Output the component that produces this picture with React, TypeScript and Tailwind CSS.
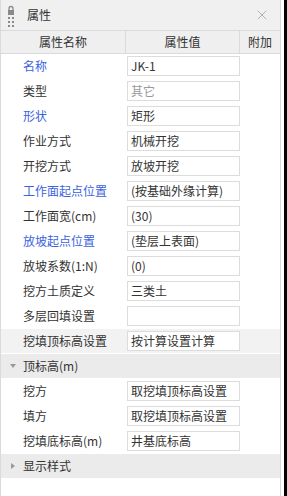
import { X } from "lucide-react";

type Row = {
  label: string;
  value: string;
  blue?: boolean;
  muted?: boolean;
  selected?: boolean;
};

const ROWS: Row[] = [
  { label: "名称", value: "JK-1", blue: true },
  { label: "类型", value: "其它", muted: true },
  { label: "形状", value: "矩形", blue: true },
  { label: "作业方式", value: "机械开挖" },
  { label: "开挖方式", value: "放坡开挖" },
  { label: "工作面起点位置", value: "(按基础外缘计算)", blue: true },
  { label: "工作面宽(cm)", value: "(30)" },
  { label: "放坡起点位置", value: "(垫层上表面)", blue: true },
  { label: "放坡系数(1:N)", value: "(0)" },
  { label: "挖方土质定义", value: "三类土" },
  { label: "多层回填设置", value: "" },
  { label: "挖填顶标高设置", value: "按计算设置计算", selected: true },
];

const TOP_ROWS: Row[] = [
  { label: "挖方", value: "取挖填顶标高设置" },
  { label: "填方", value: "取挖填顶标高设置" },
  { label: "挖填底标高(m)", value: "井基底标高" },
];

function PropRow({ row }: { row: Row }) {
  return (
    <div
      className={`flex h-[25px] items-center border-b border-white ${row.selected ? "bg-[#f2f2f2]" : "bg-white"}`}
    >
      <div className={`w-[126px] pl-[22px] ${row.blue ? "text-[#3a63e0]" : "text-[#333]"}`}>{row.label}</div>
      <div
        className={`flex h-[20px] w-[113px] items-center border border-[#dcdcdc] bg-white pl-[3px] ${row.muted ? "text-[#9a9a9a]" : "text-[#333]"}`}
      >
        {row.value}
      </div>
    </div>
  );
}

function Section({ label, open }: { label: string; open: boolean }) {
  return (
    <div className="flex h-[25px] items-center border-b border-white bg-[#ebebeb] text-[#333]">
      <div className="flex w-[22px] justify-center pl-[2px]">
        {open ? (
          <svg width="6" height="4" viewBox="0 0 6 4">
            <path d="M0 0h6L3 4z" fill="#9a9a9a" />
          </svg>
        ) : (
          <svg width="4" height="6" viewBox="0 0 4 6">
            <path d="M0 0v6l4-3z" fill="#9a9a9a" />
          </svg>
        )}
      </div>
      <span>{label}</span>
    </div>
  );
}

function LockGrip() {
  return (
    <svg width="8" height="24" viewBox="0 0 8 24" className="shrink-0">
      <path d="M2 7V5.5a2 2 0 0 1 4 0V7" stroke="#8a8a8a" strokeWidth="1.3" fill="none" />
      <rect x="1" y="7" width="6" height="5" fill="#8a8a8a" />
      <rect x="1" y="14" width="2" height="2" fill="#8a8a8a" />
      <rect x="5" y="14" width="2" height="2" fill="#8a8a8a" />
      <rect x="1" y="18" width="2" height="2" fill="#8a8a8a" />
      <rect x="5" y="18" width="2" height="2" fill="#8a8a8a" />
      <rect x="1" y="22" width="2" height="2" fill="#8a8a8a" />
      <rect x="5" y="22" width="2" height="2" fill="#8a8a8a" />
    </svg>
  );
}

export default function App() {
  return (
    <div
      className="flex h-[496px] w-[287px] bg-white text-[12px] leading-none"
      style={{ fontFamily: '"Noto Sans CJK SC", "Noto Sans", sans-serif' }}
    >
      <div className="flex w-[281px] flex-col border-x border-[#dadada]">
        {/* Title bar */}
        <div className="flex h-[31px] items-center border-b border-[#dadada] bg-[#f0f0f0] pl-[6px] pr-[10px]">
          <LockGrip />
          <span className="ml-[12px] flex-1 text-[#333]">属性</span>
          <X size={16} strokeWidth={1.1} className="text-[#9a9a9a]" />
        </div>

        {/* Column header */}
        <div className="flex h-[23px] items-center border-b border-[#dadada] bg-[#efefef] text-[#333]">
          <div className="flex h-full w-[125px] items-center justify-center border-r border-[#dadada]">属性名称</div>
          <div className="flex h-full w-[114px] items-center justify-center border-r border-[#dadada]">属性值</div>
          <div className="flex h-full flex-1 items-center justify-center">附加</div>
        </div>

        {ROWS.map((r) => (
          <PropRow key={r.label} row={r} />
        ))}
        <Section label="顶标高(m)" open />
        {TOP_ROWS.map((r) => (
          <PropRow key={r.label} row={r} />
        ))}
        <Section label="显示样式" open={false} />
      </div>
      <div className="w-[3px]" />
      <div className="flex-1 bg-black" />
    </div>
  );
}
